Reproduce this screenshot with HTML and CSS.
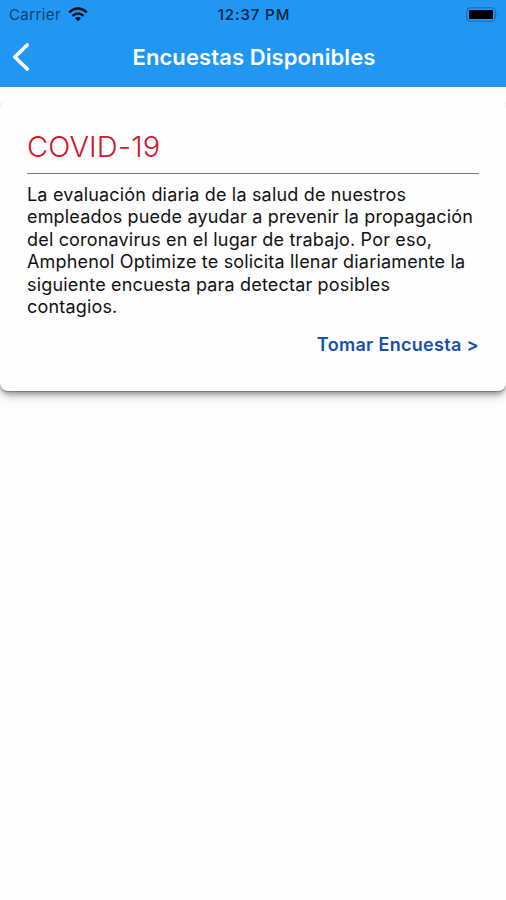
FILE: index.html
```html
<!DOCTYPE html>
<html lang="es">
<head>
    <meta charset="UTF-8">
    <meta name="viewport" content="width=device-width, initial-scale=1.0">
    <title>Encuestas Disponibles</title>
    <link rel="stylesheet" href="styles.css">
</head>
<body>

<header class="header">
    <div class="status-bar">
        <div class="status-left">
            <span class="carrier">Carrier</span>
            <svg class="wifi" width="20" height="15" viewBox="0 0 20 15" fill="none" stroke="#06121d" stroke-width="2.4">
                <path d="M1.2 5.4 Q10 -2.2 18.8 5.4"/>
                <path d="M4.4 8.8 Q10 4 15.6 8.8"/>
                <path d="M7 11.3 Q10 8.8 13 11.3 L10 14.2 Z" fill="#06121d" stroke="none"/>
            </svg>
        </div>
        <span class="time">12:37 PM</span>
        <div class="status-right">
            <svg width="33" height="15" viewBox="0 0 33 15">
                <rect x="0.75" y="0.75" width="28.5" height="13.5" rx="4" fill="none" stroke="#1b6cab" stroke-width="1.2"/>
                <rect x="3" y="3" width="24" height="9" rx="1" fill="#000"/>
                <path d="M31 5 Q32.6 7.5 31 10 Z" fill="#1b6cab"/>
            </svg>
        </div>
    </div>
    <nav class="nav-bar">
        <button class="btn-back" aria-label="Volver">
            <svg width="18" height="30" viewBox="0 0 18 30" fill="none" stroke="#fff" stroke-width="3.8" stroke-linecap="round" stroke-linejoin="round">
                <path d="M15.2 3 L2.8 15 L15.2 27"/>
            </svg>
        </button>
        <h1 class="title">Encuestas Disponibles</h1>
    </nav>
</header>

<main class="card">
    <h2 class="card-title">COVID-19</h2>
    <p class="card-text">La evaluación diaria de la salud de nuestros empleados puede ayudar a prevenir la propagación del coronavirus en el lugar de trabajo. Por eso, Amphenol Optimize te solicita llenar diariamente la siguiente encuesta para detectar posibles contagios.</p>
    <a class="card-link" href="#">Tomar Encuesta &gt;</a>
</main>

</body>
</html>
```
FILE: styles.css
```css
* {
    box-sizing: border-box;
}

body {
    font-family: Inter, "Liberation Sans", sans-serif;
    margin: 0;
    min-height: 100vh;
    background-color: #fefefe;
    color: #111;
}

.header {
    height: 87px;
    background-color: #2196f3;
    border-bottom: 1px solid #3c8fd0;
}

.status-bar {
    display: grid;
    grid-template-columns: 1fr auto 1fr;
    align-items: center;
    height: 28px;
    padding: 0 7px 0 9px;
}

.status-left {
    display: flex;
    align-items: center;
    gap: 7px;
}

.carrier {
    font-size: 15px;
    letter-spacing: 0.4px;
    color: #123f66;
}

.time {
    font-size: 15px;
    font-weight: 500;
    letter-spacing: 0.9px;
    color: #06233c;
}

.status-right {
    display: flex;
    justify-content: flex-end;
}

.nav-bar {
    display: grid;
    grid-template-columns: 40px 1fr 40px;
    align-items: center;
    height: 58px;
}

.btn-back {
    display: flex;
    width: 40px;
    padding: 0 0 0 12px;
    border: none;
    background: none;
    cursor: pointer;
}

.title {
    margin: 0;
    padding-left: 2px;
    font-size: 22px;
    font-weight: 600;
    letter-spacing: 0.1px;
    text-align: center;
    color: white;
}

.card {
    height: 291px;
    margin-top: 13px;
    padding: 29px 27px 0;
    background-color: #fefefe;
    border-radius: 8px;
    box-shadow: 0 1px 1px rgba(0, 0, 0, 0.25), 0 3px 4px rgba(0, 0, 0, 0.22), 0 7px 10px -2px rgba(0, 0, 0, 0.25);
}

.card-title {
    height: 45px;
    margin: 0;
    border-bottom: 1px solid #777;
    font-size: 29px;
    font-weight: 300;
    letter-spacing: 0.15px;
    line-height: 36px;
    color: #d5142a;
}

.card-text {
    margin: 9.5px 0 0;
    font-size: 18px;
    letter-spacing: 0.18px;
    line-height: 22.5px;
}

.card-link {
    display: block;
    margin-top: 15px;
    font-size: 18px;
    font-weight: 600;
    letter-spacing: 0.32px;
    line-height: 22px;
    text-align: right;
    text-decoration: none;
    color: #1550ad;
}
```
